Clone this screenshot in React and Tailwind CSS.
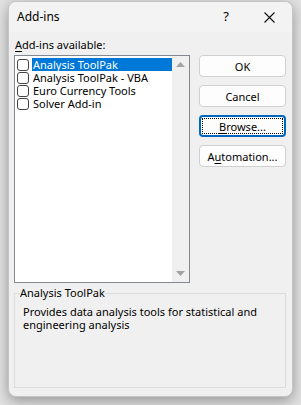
import React from 'react';

const items = ['Analysis ToolPak', 'Analysis ToolPak - VBA', 'Euro Currency Tools', 'Solver Add-in'];

const Checkbox = () => (
  <span className="block w-[12px] h-[12px] rounded-[3px] border border-[#444] bg-white shrink-0" />
);

const Button = ({ children, focused }) => (
  <button
    className={`w-[87px] h-[22px] rounded-[4px] bg-[#fdfdfd] text-[11px] leading-none text-black flex items-center justify-center ${
      focused ? 'border-2 border-[#0067c0] p-[1px]' : 'border border-[#d0d0d0]'
    }`}
  >
    {focused ? (
      <span className="w-full h-full border border-dotted border-black flex items-center justify-center">{children}</span>
    ) : (
      children
    )}
  </button>
);

export default function App() {
  return (
    <div
      className="w-[301px] h-[405px] bg-[#e2e2e2] pl-[8px] pt-[1px] overflow-hidden"
      style={{ fontFamily: '"Noto Sans", "Liberation Sans", sans-serif' }}
    >
      <div className="w-[285px] h-[396px] rounded-[8px] border border-[#c4c4c4] bg-[#f0f0f0] shadow-[0_4px_14px_rgba(0,0,0,0.35)] flex flex-col overflow-hidden">
        {/* title bar */}
        <div className="h-[30px] flex items-center pl-[8px] bg-[#f3f3f3] shrink-0">
          <span className="text-[12px] text-black flex-1">Add-ins</span>
          <span className="text-[13px] text-black w-[20px] text-center mr-[28px]">?</span>
          <svg width="11" height="11" viewBox="0 0 11 11" className="mr-[17px]">
            <path d="M0.5 0.5 L10.5 10.5 M10.5 0.5 L0.5 10.5" stroke="#111" strokeWidth="1.1" />
          </svg>
        </div>

        {/* body */}
        <div className="flex flex-col px-[5px] pt-[6px]">
          <div className="flex gap-[9px]">
            <div className="flex flex-col">
              <div className="h-[17px] text-[11px] leading-[14px] text-black pl-[1px]">
                <span className="underline underline-offset-2">A</span>dd-ins available:
              </div>
              <div className="w-[176px] h-[228px] border border-[#828790] flex">
                <div className="flex-1 bg-white pt-[2px] pl-[2px] flex flex-col">
                  {items.map((item, i) => (
                    <div key={item} className="h-[13px] flex items-center gap-[3px]">
                      <Checkbox />
                      <span
                        className={`flex-1 h-[13px] pl-[1px] text-[11px] leading-[13px] whitespace-nowrap ${
                          i === 0 ? 'bg-[#0078d7] text-white' : 'text-black'
                        }`}
                      >
                        {item}
                      </span>
                    </div>
                  ))}
                </div>
                <div className="w-[17px] bg-[#f0f0f0] flex flex-col items-center justify-between pt-[6px] pb-[6px]">
                  <svg width="9" height="5" viewBox="0 0 9 5">
                    <path d="M4.5 0 L9 5 L0 5 Z" fill="#a3a3a3" />
                  </svg>
                  <svg width="9" height="5" viewBox="0 0 9 5">
                    <path d="M0 0 L9 0 L4.5 5 Z" fill="#a3a3a3" />
                  </svg>
                </div>
              </div>
            </div>
            <div className="flex flex-col pt-[17px] gap-[8px]">
              <Button>OK</Button>
              <Button>Cancel</Button>
              <Button focused>
                <span>
                  <span className="underline underline-offset-2">B</span>rowse...
                </span>
              </Button>
              <Button>
                <span>
                  A<span className="underline underline-offset-2">u</span>tomation...
                </span>
              </Button>
            </div>
          </div>

          <fieldset className="mt-[3px] w-[272px] h-[102px] border border-[#dcdcdc] px-0">
            <legend className="ml-[5px] px-0 text-[11px] leading-[14px] text-black">Analysis ToolPak</legend>
            <p className="mt-[5px] px-[8px] text-[11px] leading-[13px] text-black">
              Provides data analysis tools for statistical and engineering analysis
            </p>
          </fieldset>
        </div>
      </div>
    </div>
  );
}
